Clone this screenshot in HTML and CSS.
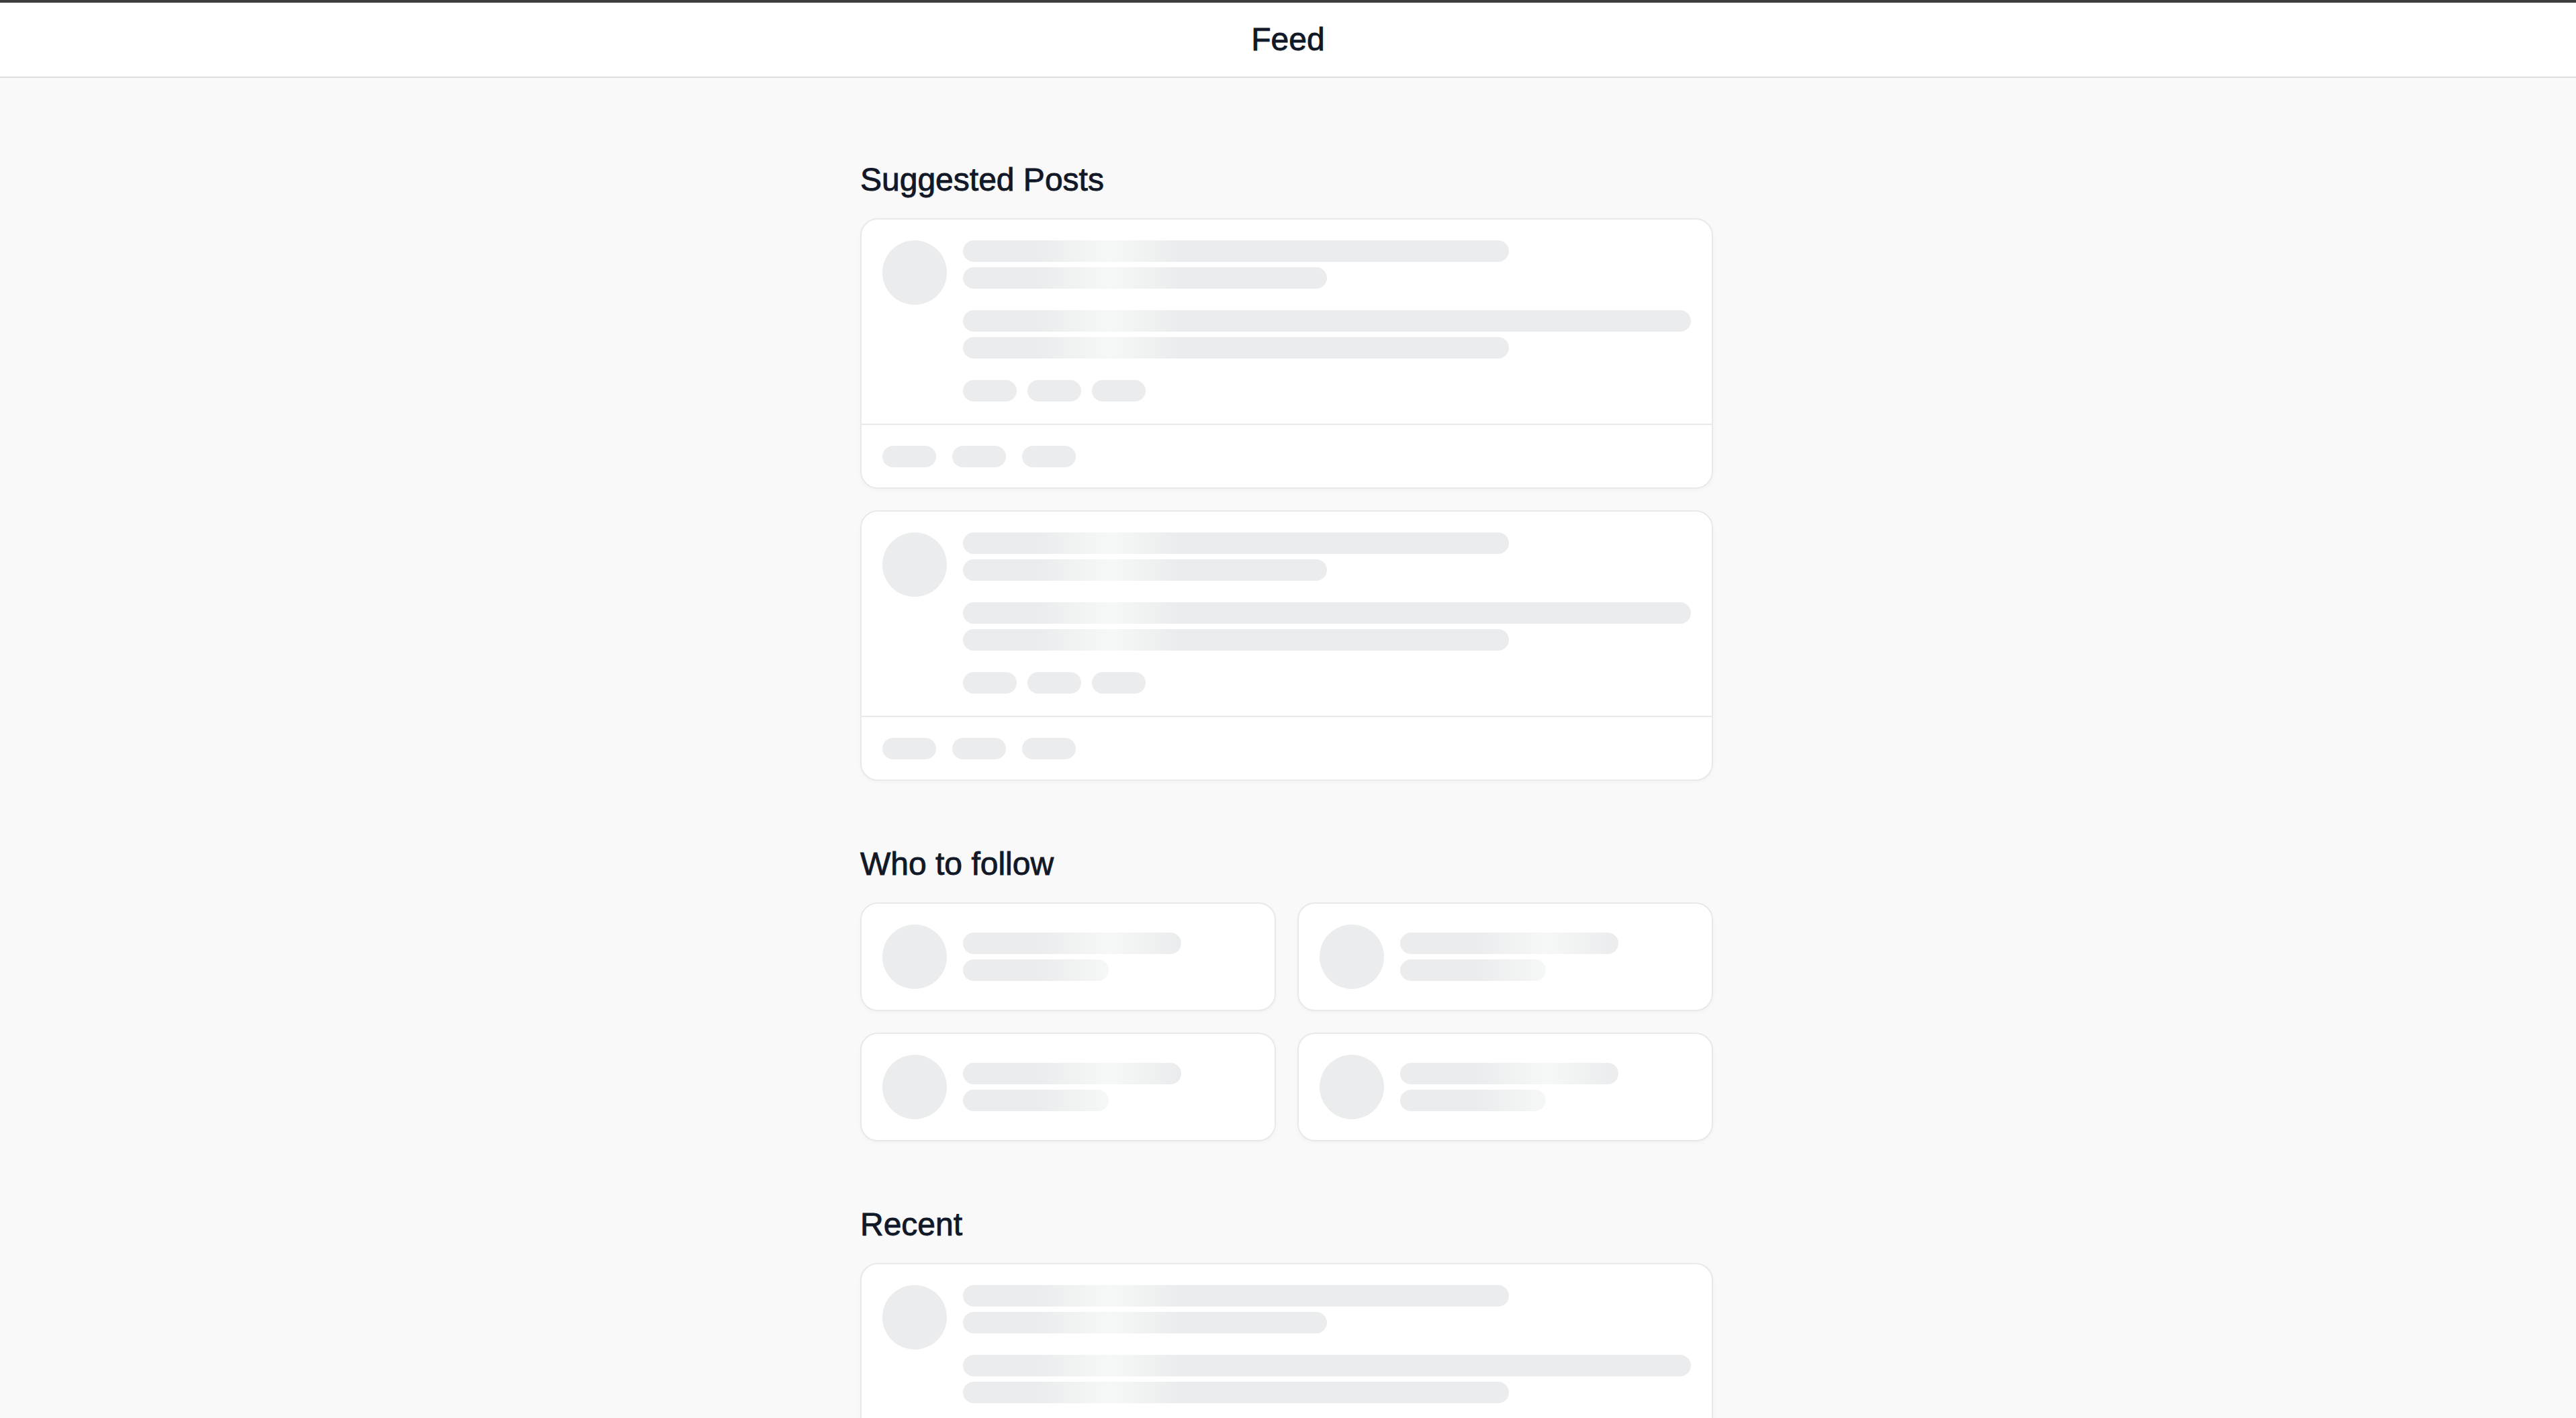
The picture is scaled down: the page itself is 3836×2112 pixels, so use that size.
FILE: index.html
```html
<!DOCTYPE html>
<html lang="en">
<head>
    <meta charset="UTF-8">
    <meta name="viewport" content="width=device-width, initial-scale=1.0">
    <title>Feed</title>
    <link rel="stylesheet" href="styles.css">
</head>
<body>
    <header class="topbar">
        <h1>Feed</h1>
    </header>

    <main class="feed">
        <section class="section">
            <h2 class="section-title">Suggested Posts</h2>
            <div class="post-list">
                <div class="post-card">
                    <div class="post-main">
                        <div class="avatar"></div>
                        <div class="post-content">
                            <div class="line-group">
                                <div class="line w-75"></div>
                                <div class="line w-50"></div>
                            </div>
                            <div class="line-group">
                                <div class="line w-100"></div>
                                <div class="line w-75"></div>
                            </div>
                            <div class="tag-row">
                                <div class="pill"></div>
                                <div class="pill"></div>
                                <div class="pill"></div>
                            </div>
                        </div>
                    </div>
                    <div class="post-footer">
                        <div class="pill"></div>
                        <div class="pill"></div>
                        <div class="pill"></div>
                    </div>
                </div>

                <div class="post-card">
                    <div class="post-main">
                        <div class="avatar"></div>
                        <div class="post-content">
                            <div class="line-group">
                                <div class="line w-75"></div>
                                <div class="line w-50"></div>
                            </div>
                            <div class="line-group">
                                <div class="line w-100"></div>
                                <div class="line w-75"></div>
                            </div>
                            <div class="tag-row">
                                <div class="pill"></div>
                                <div class="pill"></div>
                                <div class="pill"></div>
                            </div>
                        </div>
                    </div>
                    <div class="post-footer">
                        <div class="pill"></div>
                        <div class="pill"></div>
                        <div class="pill"></div>
                    </div>
                </div>
            </div>
        </section>

        <section class="section">
            <h2 class="section-title">Who to follow</h2>
            <div class="follow-grid">
                <div class="follow-card">
                    <div class="avatar"></div>
                    <div class="line-group follow-lines">
                        <div class="line w-75"></div>
                        <div class="line w-50"></div>
                    </div>
                </div>
                <div class="follow-card">
                    <div class="avatar"></div>
                    <div class="line-group follow-lines">
                        <div class="line w-75"></div>
                        <div class="line w-50"></div>
                    </div>
                </div>
                <div class="follow-card">
                    <div class="avatar"></div>
                    <div class="line-group follow-lines">
                        <div class="line w-75"></div>
                        <div class="line w-50"></div>
                    </div>
                </div>
                <div class="follow-card">
                    <div class="avatar"></div>
                    <div class="line-group follow-lines">
                        <div class="line w-75"></div>
                        <div class="line w-50"></div>
                    </div>
                </div>
            </div>
        </section>

        <section class="section">
            <h2 class="section-title">Recent</h2>
            <div class="post-list">
                <div class="post-card">
                    <div class="post-main">
                        <div class="avatar"></div>
                        <div class="post-content">
                            <div class="line-group">
                                <div class="line w-75"></div>
                                <div class="line w-50"></div>
                            </div>
                            <div class="line-group">
                                <div class="line w-100"></div>
                                <div class="line w-75"></div>
                            </div>
                            <div class="tag-row">
                                <div class="pill"></div>
                                <div class="pill"></div>
                                <div class="pill"></div>
                            </div>
                        </div>
                    </div>
                    <div class="post-footer">
                        <div class="pill"></div>
                        <div class="pill"></div>
                        <div class="pill"></div>
                    </div>
                </div>
            </div>
        </section>
    </main>
</body>
</html>
```

FILE: styles.css
```css
* {
    box-sizing: border-box;
}
body {
    font-family: "Liberation Sans", Arial, Helvetica, sans-serif;
    background-color: #f9f9fa;
    margin: 0;
    color: #111827;
}
.topbar {
    height: 116px;
    background: #fff;
    border-top: 4px solid #3d3d3d;
    border-bottom: 2px solid #dedede;
    display: flex;
    align-items: center;
    justify-content: center;
}
.topbar h1 {
    margin: 0;
    font-size: 48px;
    font-weight: 500;
    line-height: 1;
    -webkit-text-stroke: 0.9px currentColor;
}
.feed {
    width: 1274px;
    margin: 0 auto;
    padding: 124px 4px 120px 0;
}
.section + .section {
    margin-top: 96px;
}
.section-title {
    margin: 0 0 29px;
    font-size: 48px;
    font-weight: 500;
    line-height: 56px;
    -webkit-text-stroke: 0.9px currentColor;
}
.post-list {
    display: flex;
    flex-direction: column;
    gap: 32px;
}
.post-card, .follow-card {
    background: #fff;
    border: 2px solid #e8e9ec;
    border-radius: 26px;
    box-shadow: 0 2px 6px rgba(0,0,0,0.03);
}
.post-main {
    display: flex;
    align-items: flex-start;
    gap: 24px;
    padding: 31px 31px 33px;
}
.post-content {
    flex: 1;
    display: flex;
    flex-direction: column;
    gap: 32px;
}
.post-footer {
    display: flex;
    gap: 24px;
    padding: 31px 31px 30px;
    border-top: 2px solid #e8e9ec;
}
.avatar {
    width: 96px;
    height: 96px;
    flex-shrink: 0;
    border-radius: 50%;
    background: #ebeced;
}
.line-group {
    display: flex;
    flex-direction: column;
    gap: 8px;
}
/* shimmer is frozen at one spot, same offset for every bar */
.line {
    height: 32px;
    border-radius: 16px;
    background: linear-gradient(90deg, #ebeced 0, #ebeced 115px, #f6f7f7 218px, #ebeced 320px, #ebeced 100%);
}
.w-100 { width: 100%; }
.w-75 { width: 75%; }
.w-50 { width: 50%; }
.tag-row {
    display: flex;
    gap: 16px;
}
.pill {
    width: 80px;
    height: 32px;
    border-radius: 16px;
    background: #ebeced;
}
.follow-grid {
    display: grid;
    grid-template-columns: 1fr 1fr;
    gap: 32px;
}
.follow-card {
    display: flex;
    align-items: center;
    gap: 24px;
    padding: 31px;
}
.follow-lines {
    flex: 1;
}
```
